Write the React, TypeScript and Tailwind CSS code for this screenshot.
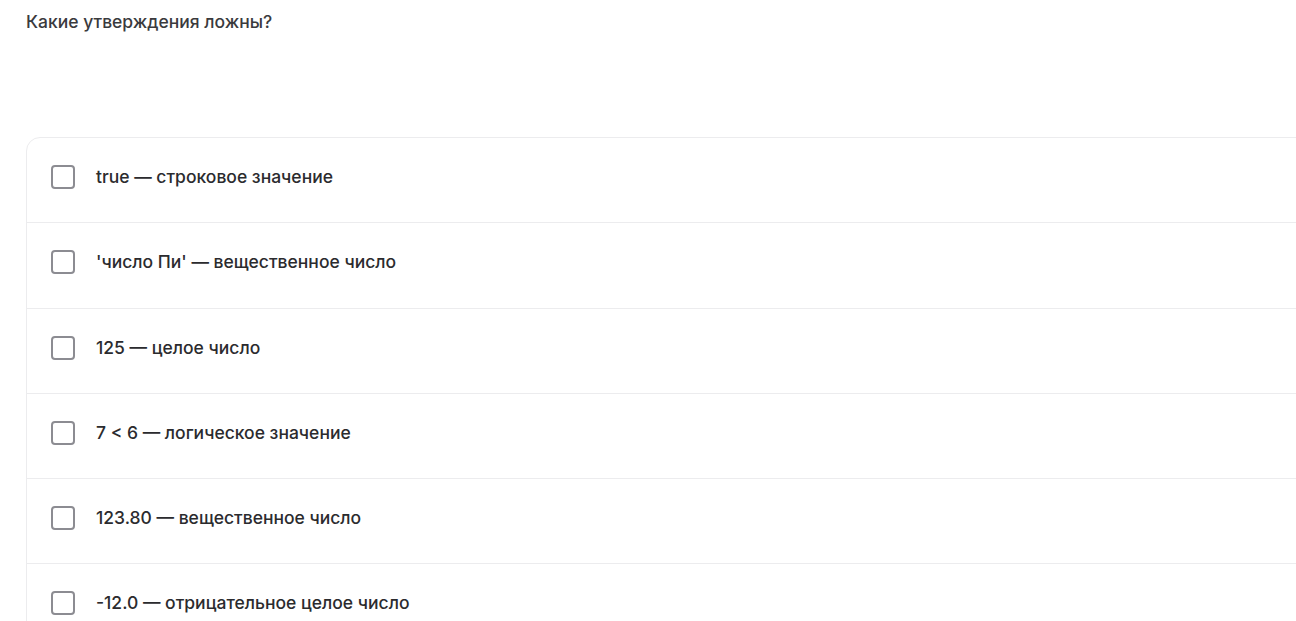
import React, { useState } from 'react';

const options = [
  'true — строковое значение',
  "'число Пи' — вещественное число",
  '125 — целое число',
  '7 < 6 — логическое значение',
  '123.80 — вещественное число',
  '-12.0 — отрицательное целое число',
];

const App: React.FC = () => {
  const [checked, setChecked] = useState<boolean[]>(options.map(() => false));

  const toggle = (i: number) =>
    setChecked((prev) => prev.map((v, j) => (j === i ? !v : v)));

  return (
    <div className="min-h-screen w-full overflow-hidden bg-white font-['Inter',sans-serif] text-[#2b2b2e]">
      <div className="pl-[26px] pt-[11px]">
        <h2 className="text-[17.5px] font-medium leading-[22px] text-[#3a3a3d]">
          Какие утверждения ложны?
        </h2>

        {/* answer list */}
        <div className="mt-[104px] w-[1320px] rounded-[14px] border border-[#ececee]">
          {options.map((text, i) => (
            <label
              key={i}
              className={`flex cursor-pointer items-center gap-[21px] px-[24px] pt-[27px] pb-[33.25px] ${
                i > 0 ? 'border-t border-[#ececee]' : ''
              }`}
            >
              <input
                type="checkbox"
                checked={checked[i]}
                onChange={() => toggle(i)}
                className="sr-only"
              />
              <span className="h-[24px] w-[24px] shrink-0 rounded-[4px] border-2 border-[#8c8c92] bg-white" />
              <span className="text-[17.5px] font-medium leading-[24px]">{text}</span>
            </label>
          ))}
        </div>
      </div>
    </div>
  );
};

export default App;
